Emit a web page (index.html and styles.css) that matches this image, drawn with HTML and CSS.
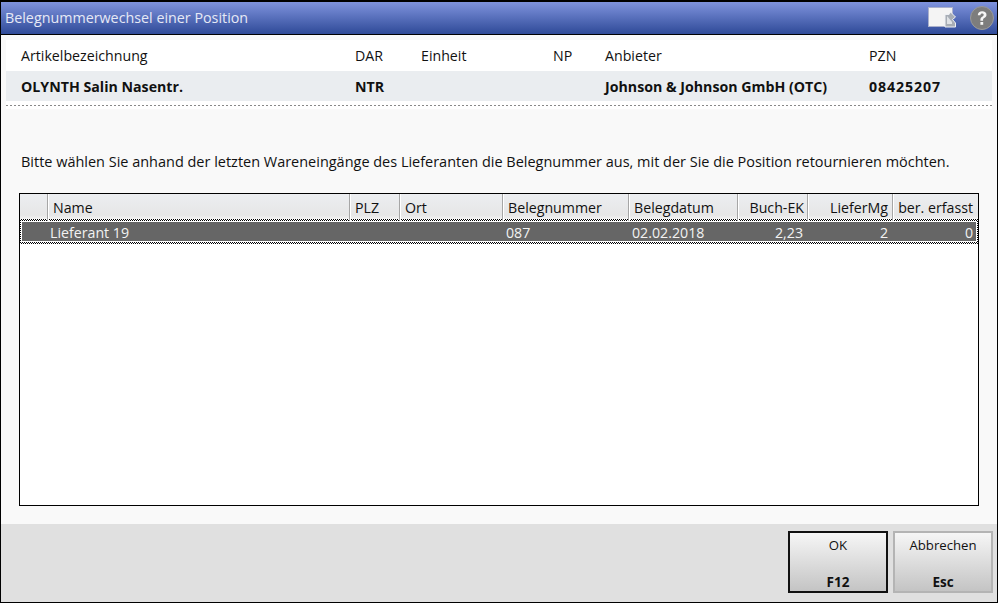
FILE: index.html
```html
<!DOCTYPE html>
<html lang="de">
<head>
<meta charset="utf-8">
<title>Belegnummerwechsel einer Position</title>
<link rel="stylesheet" href="styles.css">
</head>
<body>
<div class="window">
  <header class="titlebar">
    <span class="title">Belegnummerwechsel einer Position</span>
    <div class="title-icons">
      <svg class="ico-export" width="28" height="22" viewBox="0 1 28 22">
        <rect x="0.500" y="1.500" width="24" height="19" fill="#f4f4f4" stroke="#aab0cc"/>
        <path d="M17 8.500h4l1.500-2.500 5 5-3 2.500 3 3.500v4H17z" fill="#a7adb5" stroke="#eef0f4" stroke-width="1"/>
        <path d="M19 10l5 6v2h-5z" fill="#dfe2e6"/>
      </svg>
      <svg class="ico-help" width="24" height="24" viewBox="0 0 24 24">
        <circle cx="12" cy="12" r="11.500" fill="#7d7d7d" stroke="#9a9a9a"/>
        <path d="M7.800 9.200c0-2.600 1.900-4 4.400-4 2.600 0 4.300 1.400 4.300 3.500 0 1.800-1 2.600-2.300 3.400-.9.600-1.100 1-1.100 2v.6h-2.700v-.9c0-1.500.6-2.300 1.800-3.100 1-.7 1.500-1.100 1.500-1.900 0-.9-.7-1.400-1.600-1.400-1 0-1.700.6-1.700 1.800z" fill="#f6f6f6"/>
        <rect x="10.400" y="16" width="2.800" height="2.800" fill="#f6f6f6"/>
      </svg>
    </div>
  </header>
  <main class="content">
    <section class="article">
      <div class="article-row">
        <span>Artikelbezeichnung</span><span>DAR</span><span>Einheit</span><span>NP</span><span>Anbieter</span><span>PZN</span>
      </div>
      <div class="article-row values">
        <span>OLYNTH Salin Nasentr.</span><span>NTR</span><span></span><span></span><span>Johnson &amp; Johnson GmbH (OTC)</span><span class="pzn">08425207</span>
      </div>
    </section>
    <p class="hint">Bitte wählen Sie anhand der letzten Wareneingänge des Lieferanten die Belegnummer aus, mit der Sie die Position retournieren möchten.</p>
    <section class="table">
      <div class="cols head">
        <span></span><span>Name</span><span>PLZ</span><span>Ort</span><span>Belegnummer</span><span>Belegdatum</span><span class="num">Buch-EK</span><span class="num">LieferMg</span><span class="num">ber. erfasst</span>
      </div>
      <div class="row-frame">
        <div class="cols row">
          <span></span><span>Lieferant 19</span><span></span><span></span><span>087</span><span>02.02.2018</span><span class="num">2,23</span><span class="num">2</span><span class="num">0</span>
        </div>
      </div>
    </section>
  </main>
  <footer class="footer">
    <button class="btn default" type="button"><span>OK</span><b>F12</b></button>
    <button class="btn" type="button"><span>Abbrechen</span><b>Esc</b></button>
  </footer>
</div>
</body>
</html>
```
FILE: styles.css
```css
* { box-sizing: border-box; }
html, body { margin: 0; padding: 0; }
body {
  width: 998px;
  height: 603px;
  overflow: hidden;
  font-family: "Open Sans", "Noto Sans", sans-serif;
  font-size: 14.2px;
  color: #111;
}
.window {
  width: 998px;
  height: 603px;
  display: flex;
  flex-direction: column;
  border: 1px solid #000;
  border-top-width: 2px;
  background: #f9f9f9;
}
.titlebar {
  height: 33px;
  flex: none;
  display: flex;
  align-items: center;
  justify-content: space-between;
  padding: 0 3px 1px 4px;
  background: linear-gradient(#7f93dd, #2f4a98);
  border-bottom: 1px solid #000;
  color: #e6e9f6;
  font-size: 14.3px;
}
.title-icons { display: flex; align-items: center; gap: 14px; }
.ico-export, .ico-help { display: block; }
.content {
  flex: 1;
  display: flex;
  flex-direction: column;
  padding: 5px 5px 0;
  min-height: 0;
}
.article {
  height: 69px;
  flex: none;
  background-color: #fff;
  background-image: repeating-linear-gradient(90deg, #888 0 2px, transparent 2px 4px);
  background-size: 100% 1px;
  background-position: 0 65px;
  background-repeat: no-repeat;
}
.article-row {
  height: 31px;
  display: grid;
  grid-template-columns: 334px 66px 132px 52px 264px 1fr;
  align-items: center;
  padding-left: 15px;
  white-space: nowrap;
}
.values {
  height: 30px;
  background: #eaedf0;
  font-weight: 700;
  font-size: 14.2px;
}
.pzn { letter-spacing: 0.9px; }
.hint {
  margin: 43px 0 0 15px;
  height: 20px;
  line-height: 20px;
  white-space: nowrap;
  font-size: 14.47px;
}
.table {
  margin: 21px 13px 18px 13px;
  flex: 1;
  min-height: 0;
  background: #fff;
  border: 1px solid #000;
}
.cols {
  display: grid;
  grid-template-columns: 27px 302px 50px 103px 126px 109px 70px 85px 1fr;
}
.head {
  height: 25px;
  background: linear-gradient(#eceef1, #e6e6e6 85%, #f3f3f3);
}
.head span {
  padding: 0 5px;
  line-height: 27px;
  border-left: 1px solid #a6a6a6;
  box-shadow: inset 1px 0 #fff;
  white-space: nowrap;
}
.head span:first-child { border-left: 0; box-shadow: none; }
.head .num { text-align: right; padding-right: 3px; }
.head .num:nth-child(8) { padding-right: 4px; }
.head .num:last-child { padding-right: 5px; }
.row-frame {
  height: 25px;
  padding: 2px 1px;
  background: repeating-conic-gradient(#000 0 25%, #fff 0 50%) 0 0 / 2px 2px;
}
.row {
  height: 21px;
  background: #666;
  border: 1px solid #fff;
  color: #f2f2f2;
  line-height: 21px;
  grid-template-columns: 25px 303px 50px 103px 126px 109px 70px 85px 1fr;
}
.row span { padding: 0 3px; white-space: nowrap; }
.row .num { text-align: right; padding-right: 5px; }
.row .num:last-child { padding-right: 3px; }
.footer {
  flex: none;
  height: 78px;
  background: #e0e0e0;
  display: flex;
  justify-content: flex-end;
  gap: 5px;
  padding: 7px 4px 0 0;
}
.btn {
  width: 100px;
  height: 62px;
  padding: 3px 0 0;
  display: flex;
  flex-direction: column;
  align-items: center;
  justify-content: space-between;
  font: inherit;
  font-size: 13.2px;
  color: #111;
  border: 2px solid #b4b4b4;
  background: linear-gradient(#f6f6f6, #c4c4c4);
}
.btn.default { border-color: #111; }
.btn b { font-weight: 700; font-size: 13.5px; }
```
